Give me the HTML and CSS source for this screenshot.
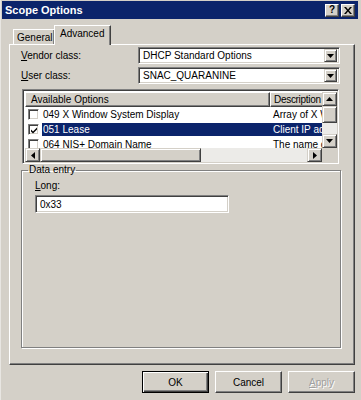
FILE: index.html
```html
<!DOCTYPE html>
<html>
<head>
<meta charset="utf-8">
<link rel="stylesheet" href="styles.css">
</head>
<body>
<div class="window">
  <div class="titlebar">
    <span class="title">Scope Options</span>
    <span class="tbtn">?</span>
    <span class="tbtn close">
      <svg width="8" height="7" viewBox="0 0 8 7"><path d="M0 0h2l2 2.5 2-2.5h2L5 3.5 8 7H6L4 4.5 2 7H0l3-3.5z" fill="#000"/></svg>
    </span>
  </div>
  <div class="main">
    <div class="tabs">
      <div class="tab">General</div>
      <div class="tab active">Advanced</div>
    </div>
    <div class="panel">
      <div class="row">
        <label class="lbl"><u>V</u>endor class:</label>
        <div class="combo"><span class="combo-text">DHCP Standard Options</span><span class="dd"><svg width="7" height="4" viewBox="0 0 7 4"><path d="M0 0h7L3.5 4z" fill="#000"/></svg></span></div>
      </div>
      <div class="row">
        <label class="lbl"><u>U</u>ser class:</label>
        <div class="combo"><span class="combo-text">SNAC_QUARANINE</span><span class="dd"><svg width="7" height="4" viewBox="0 0 7 4"><path d="M0 0h7L3.5 4z" fill="#000"/></svg></span></div>
      </div>
      <div class="list">
        <div class="list-view">
          <div class="header">
            <div class="hcell col1">Available Options</div>
            <div class="hcell col2">Description</div>
          </div>
          <div class="lrow">
            <span class="chk"></span>
            <span class="litem"><span class="c1">049 X Window System Display</span><span class="c2">Array of X Window</span></span>
          </div>
          <div class="lrow">
            <span class="chk"><svg width="8" height="8" viewBox="0 0 8 8"><path d="M1 3.5l2 2L7 1.5v2L3 7.5l-2-2z" fill="#000"/></svg></span>
            <span class="litem sel"><span class="c1">051 Lease</span><span class="c2">Client IP address</span></span>
          </div>
          <div class="lrow">
            <span class="chk"></span>
            <span class="litem"><span class="c1">064 NIS+ Domain Name</span><span class="c2">The name of</span></span>
          </div>
        </div>
        <div class="vscroll">
          <span class="sbtn"><svg width="7" height="4" viewBox="0 0 7 4"><path d="M3.5 0L7 4H0z" fill="#000"/></svg></span>
          <span class="vthumb"></span>
          <span class="vtrack"></span>
          <span class="sbtn"><svg width="7" height="4" viewBox="0 0 7 4"><path d="M0 0h7L3.5 4z" fill="#000"/></svg></span>
        </div>
        <div class="hscroll">
          <span class="sbtn"><svg width="4" height="7" viewBox="0 0 4 7"><path d="M4 0v7L0 3.5z" fill="#000"/></svg></span>
          <span class="hthumb"></span>
          <span class="htrack"></span>
          <span class="sbtn"><svg width="4" height="7" viewBox="0 0 4 7"><path d="M0 0l4 3.5L0 7z" fill="#000"/></svg></span>
        </div>
        <div class="corner"></div>
      </div>
      <fieldset class="group">
        <legend>Data entry</legend>
        <div class="field-label"><u>L</u>ong:</div>
        <div class="textbox">0x33</div>
      </fieldset>
    </div>
    <div class="buttons">
      <button class="btn default">OK</button>
      <button class="btn">Cancel</button>
      <button class="btn disabled"><u>A</u>pply</button>
    </div>
  </div>
</div>
</body>
</html>
```
FILE: styles.css
```css
* { box-sizing: border-box; }
html, body { margin: 0; padding: 0; }
body {
  width: 361px;
  height: 400px;
  overflow: hidden;
  background: #d4d0c8;
  font-family: "Liberation Sans", Arial, sans-serif;
  font-size: 10px;
  color: #000;
}
u { text-decoration: underline; text-underline-offset: 1px; }

.window {
  height: 400px;
  padding: 1px 3px 0 1px;
  border-left: 1px solid #e8e6e2;
}
.titlebar {
  height: 18px;
  background: #0b246b;
  color: #fff;
  font-weight: bold;
  font-size: 11px;
  display: flex;
  align-items: center;
  gap: 2px;
  padding: 0 3px 0 3px;
}
.title { flex: 1; }
.tbtn {
  width: 14px;
  height: 13px;
  background: #d4d0c8;
  color: #000;
  font-size: 10px;
  font-weight: bold;
  display: flex;
  align-items: center;
  justify-content: center;
  border: 1px solid;
  border-color: #fff #404040 #404040 #fff;
  box-shadow: inset -1px -1px #808080;
  line-height: 1;
}

.main {
  padding: 0 0 0 7px;
  width: 353px;
}
.tabs {
  display: flex;
  align-items: flex-end;
  height: 19px;
  margin-top: 6px;
  padding-left: 4px;
}
.tab {
  height: 15px;
  padding: 1px 0 0 3px;
  width: 42px;
  border: 1px solid;
  border-bottom: none;
  border-color: #fff #404040 transparent #fff;
  box-shadow: inset -1px 0 #808080;
  display: flex;
  align-items: center;
  line-height: 1;
  white-space: nowrap;
  flex: none;
}
.tab.active {
  width: 57px;
  height: 20px;
  margin-left: -1px;
  margin-bottom: -1px;
  padding: 0 0 3px 5px;
  background: #d4d0c8;
  position: relative;
  z-index: 1;
}

.panel {
  width: 346px;
  height: 321px;
  border: 1px solid;
  border-color: #fff #404040 #404040 #fff;
  box-shadow: inset -1px -1px #808080;
  padding-top: 2px;
}
.row {
  display: flex;
  align-items: center;
  height: 17px;
  margin-bottom: 3px;
}
.lbl {
  width: 128px;
  padding-left: 11px;
}
.combo {
  width: 202px;
  height: 17px;
  background: #fff;
  border: 1px solid;
  border-color: #808080 #fff #fff #808080;
  box-shadow: inset 1px 1px #404040, inset -1px -1px #d4d0c8;
  display: flex;
  align-items: center;
  padding: 0 2px 0 4px;
}
.combo-text { flex: 1; }
.dd, .sbtn {
  width: 13px;
  height: 13px;
  background: #d4d0c8;
  border: 1px solid;
  border-color: #d4d0c8 #404040 #404040 #d4d0c8;
  box-shadow: inset 1px 1px #fff, inset -1px -1px #808080;
  display: flex;
  align-items: center;
  justify-content: center;
  flex: none;
}
.sbtn { width: 15px; height: 14px; }

.list {
  margin: 5px 0 0 12px;
  width: 317px;
  height: 75px;
  border: 1px solid;
  border-color: #808080 #fff #fff #808080;
  box-shadow: inset 1px 1px #404040, inset -1px -1px #d4d0c8;
  padding: 2px 1px 1px 2px;
  background: #fff;
  display: grid;
  grid-template-columns: 1fr 15px;
  grid-template-rows: 1fr 14px;
}
.list-view { overflow: hidden; }
.header { display: flex; height: 15px; }
.hcell {
  height: 15px;
  background: #d4d0c8;
  border: 1px solid;
  border-color: #fff #404040 #404040 #fff;
  box-shadow: inset -1px -1px #808080;
  padding: 0 5px;
  display: flex;
  align-items: center;
  white-space: nowrap;
  flex: none;
}
.col1 { width: 245px; }
.col2 { width: 60px; padding: 0 2px 0 3px; letter-spacing: -0.3px; }
.lrow {
  height: 15px;
  display: flex;
  align-items: center;
  padding-left: 3px;
  white-space: nowrap;
}
.chk {
  width: 11px;
  height: 11px;
  border: 1px solid;
  border-color: #808080 #fff #fff #808080;
  box-shadow: inset 1px 1px #404040, inset -1px -1px #d4d0c8;
  background: #fff;
  display: flex;
  align-items: center;
  justify-content: center;
  margin-right: 3px;
  flex: none;
}
.litem {
  display: flex;
  height: 13px;
  align-items: center;
  flex: 1;
}
.litem.sel { background: #0b246b; color: #fff; }
.c1 { width: 231px; padding-left: 1px; flex: none; }
.c2 { flex: none; }

.vscroll {
  display: flex;
  flex-direction: column;
  background: #ecebe8;
}
.vthumb {
  height: 17px;
  background: #d4d0c8;
  border: 1px solid;
  border-color: #d4d0c8 #404040 #404040 #d4d0c8;
  box-shadow: inset 1px 1px #fff, inset -1px -1px #808080;
}
.vtrack { flex: 1; }
.hscroll {
  display: flex;
  background: #ecebe8;
}
.hthumb {
  width: 161px;
  background: #d4d0c8;
  border: 1px solid;
  border-color: #d4d0c8 #404040 #404040 #d4d0c8;
  box-shadow: inset 1px 1px #fff, inset -1px -1px #808080;
}
.htrack { flex: 1; }
.corner { background: #d4d0c8; }

.group {
  margin: 0 0 0 11px;
  width: 320px;
  height: 184px;
  border: 1px solid #808080;
  box-shadow: inset 1px 1px #fff, 1px 1px #fff;
  padding: 4px 12px 0 13px;
}
.group legend {
  padding: 0 1px;
  margin-left: -7px;
  line-height: 12px;
}
.field-label { line-height: 12px; }
.textbox {
  margin-top: 3px;
  width: 194px;
  height: 18px;
  background: #fff;
  border: 1px solid;
  border-color: #808080 #fff #fff #808080;
  box-shadow: inset 1px 1px #404040, inset -1px -1px #d4d0c8;
  padding: 0 4px;
  display: flex;
  align-items: center;
}

.buttons {
  display: flex;
  justify-content: flex-end;
  gap: 6px;
  margin-top: 6px;
  width: 346px;
}
.btn {
  width: 67px;
  height: 22px;
  font: inherit;
  background: #d4d0c8;
  color: #000;
  border: 1px solid;
  border-color: #fff #404040 #404040 #fff;
  box-shadow: inset -1px -1px #808080;
  padding: 0;
}
.btn.default {
  border-color: #000;
  box-shadow: inset 1px 1px #fff, inset -1px -1px #404040, inset -2px -2px #808080;
}
.btn.disabled { color: #a0a0a0; text-shadow: 1px 1px #fff; }
```
